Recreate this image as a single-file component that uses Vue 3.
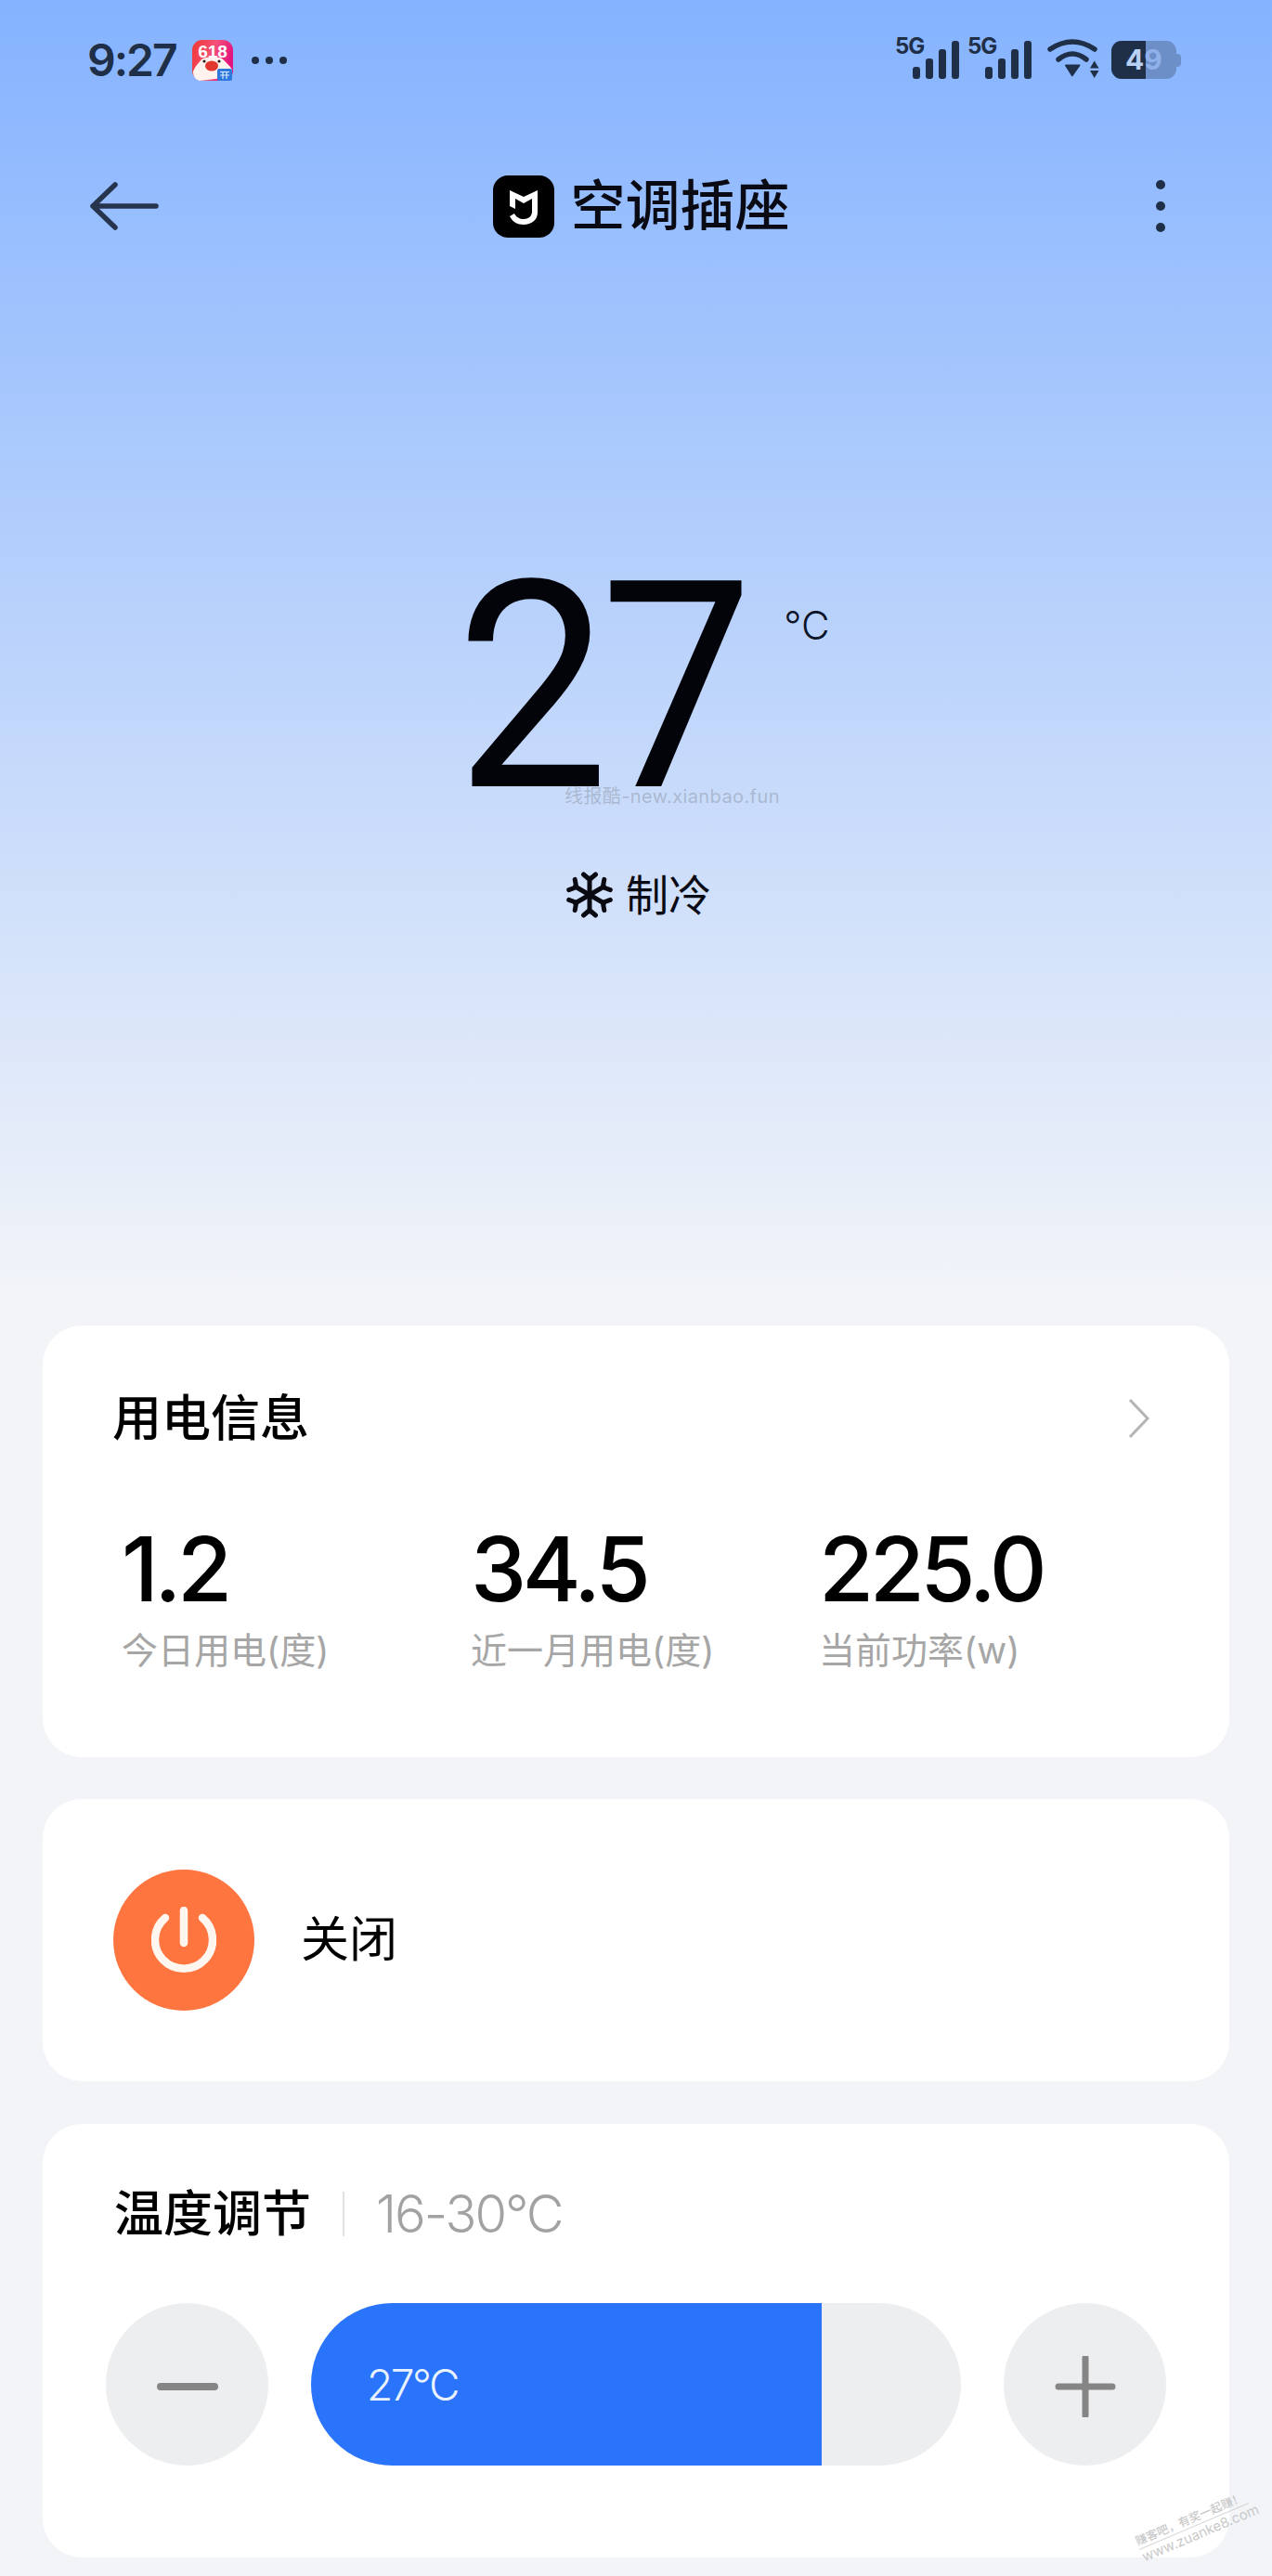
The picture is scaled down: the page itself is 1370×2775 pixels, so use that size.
<template>
  <div class="page">
    <header class="status">
      <div class="status-left">
        <span class="clock">9:27</span>
        <svg class="app-icon" viewBox="0 0 44 44">
          <defs>
            <linearGradient id="iconBg" x1="0" y1="0" x2="1" y2="0.3">
              <stop offset="0" stop-color="#f2372f" />
              <stop offset="0.55" stop-color="#f4507a" />
              <stop offset="1" stop-color="#e3157f" />
            </linearGradient>
          </defs>
          <rect width="44" height="44" rx="11" fill="url(#iconBg)" />
          <text x="22" y="19" class="icon-text" text-anchor="middle">618</text>
          <path d="M1 34 C4 27 7 25 10 21 C15 18 27 18 32 20 C36 24 40 27 43 32 L43 40 L8 44 C4 43 1 40 1 34 Z" fill="#fff3ef" />
          <ellipse cx="21" cy="28" rx="7" ry="5.5" fill="#e2372e" />
          <circle cx="13" cy="23" r="1.6" fill="#2a1a1a" />
          <circle cx="29" cy="23" r="1.6" fill="#2a1a1a" />
          <rect x="27" y="31" width="16" height="13" rx="2" fill="#2f78dd" />
          <path d="M30 34.5H40M30 38H40M33 34.5V42M37 34.5V42" stroke="#dbe9ff" stroke-width="1.2" fill="none" />
        </svg>
        <span class="more-dots"><i></i><i></i><i></i></span>
      </div>

      <div class="status-right">
        <div v-for="n in 2" :key="n" class="signal">
          <span class="signal-type">5G</span>
          <span class="bar bar-1"></span>
          <span class="bar bar-2"></span>
          <span class="bar bar-3"></span>
          <span class="bar bar-4"></span>
        </div>
        <svg class="wifi" viewBox="0 0 60 45">
          <path d="M5 13Q29 -3 53 13" fill="none" stroke="#1f2f47" stroke-width="5.5" stroke-linecap="round" />
          <path d="M14 24Q29 12 44 24" fill="none" stroke="#1f2f47" stroke-width="5.5" stroke-linecap="round" />
          <path d="M21.7 30.3H36.7L28.8 41.5Z" fill="#1f2f47" stroke="#1f2f47" stroke-width="1.5" stroke-linejoin="round" />
          <path d="M48 33.5H57.5L52.7 25.5Z" fill="#1f2f47" />
          <path d="M48 36H57.5L52.7 44Z" fill="#1f2f47" />
        </svg>
        <div class="battery">
          <div class="battery-body">
            <div class="battery-fill"></div>
            <span class="battery-num">4<b>9</b></span>
          </div>
          <span class="battery-nub"></span>
        </div>
      </div>
    </header>

    <nav class="navbar">
      <svg class="back" viewBox="0 0 74 52">
        <path d="M27 3L3 26L27 49M3 26H71" fill="none" stroke="#26344d" stroke-width="5.5" stroke-linecap="round" stroke-linejoin="round" />
      </svg>
      <div class="nav-title">
        <svg class="mi-logo" viewBox="0 0 66 67">
          <rect width="66" height="67" rx="16" fill="#000" />
          <path d="M18 16L33 23L48 16V40C48 48 41 53 33 53C26 53 21 50 18 44L23 41C25 45 29 47 33 47C38 47 42 44 42 39V25L33 30L24 25V36L18 33Z" fill="#fff" />
        </svg>
        <span>空调插座</span>
      </div>
      <span class="kebab"><i></i><i></i><i></i></span>
    </nav>

    <section class="hero">
      <div class="temp-row">
        <span class="temp">27</span>
        <span class="temp-unit">°C</span>
      </div>
      <span class="mark-top">线报酷-new.xianbao.fun</span>
      <div class="mode">
        <svg class="flake" viewBox="0 0 50 50">
          <g v-for="deg in [0, 60, 120]" :key="deg" :transform="`rotate(${deg} 25 25)`">
            <path d="M25 7V43M18.5 3L25 8.5L31.5 3M18.5 47L25 41.5L31.5 47" fill="none" stroke="#0a0a12" stroke-width="5" stroke-linecap="round" stroke-linejoin="round" />
          </g>
        </svg>
        <span>制冷</span>
      </div>
    </section>

    <main class="cards">
      <section class="card card-power-info">
        <div class="card-head">
          <h2 class="card-title">用电信息</h2>
          <svg class="chevron" viewBox="0 0 24 44">
            <path d="M2 2L21 22L2 42" fill="none" stroke="#b4b4b4" stroke-width="3" />
          </svg>
        </div>
        <div class="stats">
          <div v-for="item in stats" :key="item.label" class="stat">
            <span class="stat-num">{{ item.value }}</span>
            <span class="stat-label">{{ item.label }}</span>
          </div>
        </div>
      </section>

      <section class="card card-switch">
        <div class="power-btn">
          <svg viewBox="0 0 70 72">
            <path d="M15 12A31 31 0 1 0 55 12M35 4V39" fill="none" stroke="#fff6f0" stroke-width="8.5" stroke-linecap="round" />
          </svg>
        </div>
        <span class="switch-label">关闭</span>
      </section>

      <section class="card card-temp">
        <div class="temp-head">
          <h2 class="card-title">温度调节</h2>
          <span class="divider"></span>
          <span class="range">{{ minTemp }}-{{ maxTemp }}°C</span>
        </div>
        <div class="control">
          <button class="round-btn" type="button" aria-label="minus">
            <svg viewBox="0 0 66 66">
              <path d="M4 33H62" stroke="#858585" stroke-width="8" stroke-linecap="round" />
            </svg>
          </button>
          <div class="track">
            <div class="track-fill" :style="{ width: fillPercent + '%' }">{{ current }}°C</div>
          </div>
          <button class="round-btn" type="button" aria-label="plus">
            <svg viewBox="0 0 66 66">
              <path d="M4 33H62M33 2V64" stroke="#858585" stroke-width="7" stroke-linecap="round" />
            </svg>
          </button>
        </div>
      </section>
    </main>

    <div class="mark-corner">
      <span class="mark-cn">赚客吧，有奖一起赚！</span>
      <span class="mark-en">www.zuanke8.com</span>
    </div>
  </div>
</template>

<script setup>
import { computed } from "vue";

const minTemp = 16;
const maxTemp = 30;
const current = 27;

const stats = [
  { value: "1.2", label: "今日用电(度)" },
  { value: "34.5", label: "近一月用电(度)" },
  { value: "225.0", label: "当前功率(w)" },
];

const fillPercent = computed(() => ((current - minTemp) / (maxTemp - minTemp)) * 100);
</script>

<style>
html,
body {
  margin: 0;
  background: #f2f4f8;
}
</style>

<style scoped>
.page {
  position: relative;
  width: 1370px;
  height: 2775px;
  overflow: hidden;
  font-family: Inter, "Noto Sans CJK SC", sans-serif;
  color: #000;
  background: linear-gradient(180deg, #85b3ff 0, #f2f4f8 1400px);
}

.status {
  display: flex;
  align-items: flex-start;
  justify-content: space-between;
  height: 90px;
  padding: 40px 98px 0 94px;
  box-sizing: border-box;
}

.status-left {
  display: flex;
  align-items: center;
  height: 50px;
}

.clock {
  font-size: 48px;
  line-height: 50px;
  font-weight: 600;
  letter-spacing: -2px;
  color: #1f2f47;
}

.app-icon {
  width: 44px;
  height: 44px;
  margin-left: 17px;
}

.icon-text {
  font-family: "Liberation Sans", sans-serif;
  font-size: 19px;
  font-weight: 700;
  fill: #fff;
}

.more-dots {
  display: flex;
  gap: 7px;
  margin-left: 20px;
}

.more-dots i {
  width: 8px;
  height: 8px;
  border-radius: 50%;
  background: #1f2f47;
}

.status-right {
  display: flex;
  align-items: flex-start;
  gap: 9px;
}

.signal {
  position: relative;
  display: flex;
  align-items: flex-end;
  justify-content: flex-end;
  gap: 6px;
  width: 69px;
  height: 45px;
}

.signal-type {
  position: absolute;
  top: -3px;
  left: 0;
  font-size: 24px;
  line-height: 26px;
  font-weight: 700;
  letter-spacing: -1px;
  color: #1f2f47;
}

.bar {
  width: 8px;
  border-radius: 3px;
  background: #1f2f47;
}

.bar-1 { height: 13px; }
.bar-2 { height: 22px; }
.bar-3 { height: 32px; }
.bar-4 { height: 41px; }

.wifi {
  width: 60px;
  height: 45px;
  margin-left: 6px;
}

.battery {
  display: flex;
  align-items: center;
  margin-left: 2px;
  margin-top: 4px;
}

.battery-body {
  position: relative;
  width: 70px;
  height: 41px;
  overflow: hidden;
  border-radius: 11px;
  background: #6d8fc8;
}

.battery-fill {
  width: 37px;
  height: 100%;
  background: #1f2f47;
}

.battery-num {
  position: absolute;
  top: 0;
  left: 15px;
  font-size: 30px;
  line-height: 41px;
  font-weight: 700;
  color: #b9d0f5;
}

.battery-num b {
  font-weight: 700;
  color: #8fb1ea;
}

.battery-nub {
  width: 5px;
  height: 14px;
  border-radius: 0 4px 4px 0;
  background: #6d8fc8;
}

.navbar {
  display: flex;
  align-items: center;
  justify-content: space-between;
  height: 68px;
  margin-top: 98px;
  padding: 0 115px 0 97px;
}

.back {
  width: 74px;
  height: 52px;
}

.nav-title {
  display: flex;
  align-items: center;
  gap: 17px;
  margin-right: 34px;
  font-size: 59px;
  line-height: 68px;
  font-weight: 500;
  color: #0a0a14;
}

.mi-logo {
  width: 66px;
  height: 67px;
}

.kebab {
  display: flex;
  flex-direction: column;
  gap: 13px;
}

.kebab i {
  width: 10px;
  height: 10px;
  border-radius: 50%;
  background: #1f2f47;
}

.hero {
  position: relative;
  display: flex;
  flex-direction: column;
  align-items: center;
  height: 1172px;
  padding-top: 335px;
  box-sizing: border-box;
}

.temp-row {
  display: flex;
  align-items: flex-start;
  padding-left: 14px;
}

.temp {
  font-family: Roboto, sans-serif;
  font-size: 312px;
  line-height: 300px;
  font-weight: 400;
  letter-spacing: -10px;
  color: #03030a;
  transform: scaleX(0.94);
  transform-origin: left center;
}

.temp-unit {
  margin-top: 55px;
  margin-left: 23px;
  font-size: 42px;
  line-height: 56px;
  font-weight: 300;
  color: #0c1428;
}

.mark-top {
  position: absolute;
  top: 588px;
  left: 608px;
  font-size: 20px;
  line-height: 28px;
  letter-spacing: 0.4px;
  color: rgba(120, 125, 135, 0.38);
}

.mode {
  display: flex;
  align-items: center;
  gap: 14px;
  margin-top: 45px;
  margin-left: 6px;
  font-size: 46px;
  line-height: 56px;
  color: #0a0a14;
}

.flake {
  width: 50px;
  height: 50px;
}

.cards {
  display: flex;
  flex-direction: column;
  gap: 45px;
  padding: 0 46px;
}

.card {
  border-radius: 42px;
  background: #fff;
}

.card-power-info {
  height: 465px;
  padding: 70px 0 0 75px;
  box-sizing: border-box;
}

.card-head {
  display: flex;
  align-items: center;
  justify-content: space-between;
  padding-right: 85px;
  height: 60px;
}

.card-title {
  margin: 0;
  font-size: 53px;
  line-height: 60px;
  font-weight: 500;
}

.chevron {
  width: 24px;
  height: 44px;
}

.stats {
  display: grid;
  grid-template-columns: 376px 375px 1fr;
  margin-top: 82px;
  padding-left: 10px;
}

.stat {
  display: flex;
  flex-direction: column;
}

.stat-num {
  font-size: 96px;
  line-height: 100px;
  font-weight: 500;
  letter-spacing: -4.5px;
}

.stat-label {
  margin-top: 13px;
  font-size: 39px;
  line-height: 50px;
  color: #a6a6a6;
}

.card-switch {
  display: flex;
  align-items: center;
  height: 304px;
  padding-left: 76px;
}

.power-btn {
  display: flex;
  align-items: center;
  justify-content: center;
  width: 152px;
  height: 152px;
  border-radius: 50%;
  background: #ff7540;
}

.power-btn svg {
  width: 70px;
  height: 72px;
}

.switch-label {
  margin-left: 50px;
  font-size: 52px;
  line-height: 60px;
}

.card-temp {
  height: 467px;
  margin-top: 1px;
  padding: 67px 0 0 68px;
  box-sizing: border-box;
}

.temp-head {
  display: flex;
  align-items: center;
  padding-left: 9px;
  height: 60px;
}

.divider {
  width: 2px;
  height: 48px;
  margin: 0 34px 0 34px;
  background: #e2e2e2;
}

.range {
  font-size: 56px;
  line-height: 60px;
  font-weight: 300;
  letter-spacing: -2px;
  color: #a2a2a2;
}

.control {
  display: flex;
  align-items: center;
  gap: 46px;
  margin-top: 66px;
}

.round-btn {
  display: flex;
  align-items: center;
  justify-content: center;
  width: 175px;
  height: 175px;
  flex: 0 0 auto;
  padding: 5px 0 0;
  border: 0;
  border-radius: 50%;
  background: #edeef0;
}

.round-btn svg {
  width: 66px;
  height: 66px;
}

.track {
  width: 700px;
  height: 175px;
  overflow: hidden;
  border-radius: 88px;
  background: #edeef0;
}

.track-fill {
  display: flex;
  align-items: center;
  height: 100%;
  padding-left: 60px;
  box-sizing: border-box;
  font-size: 46px;
  font-weight: 300;
  letter-spacing: -2.5px;
  color: #e9f3ff;
  background: #2a74fb;
}

.mark-corner {
  position: absolute;
  left: 1222px;
  top: 2704px;
  display: flex;
  flex-direction: column;
  width: 128px;
  transform: rotate(-23deg);
  line-height: 17px;
  color: #c9c9c9;
}

.mark-cn {
  font-size: 12.5px;
  font-weight: 500;
  border-bottom: 1px solid #d5d5d5;
}

.mark-en {
  font-size: 15px;
}
</style>
